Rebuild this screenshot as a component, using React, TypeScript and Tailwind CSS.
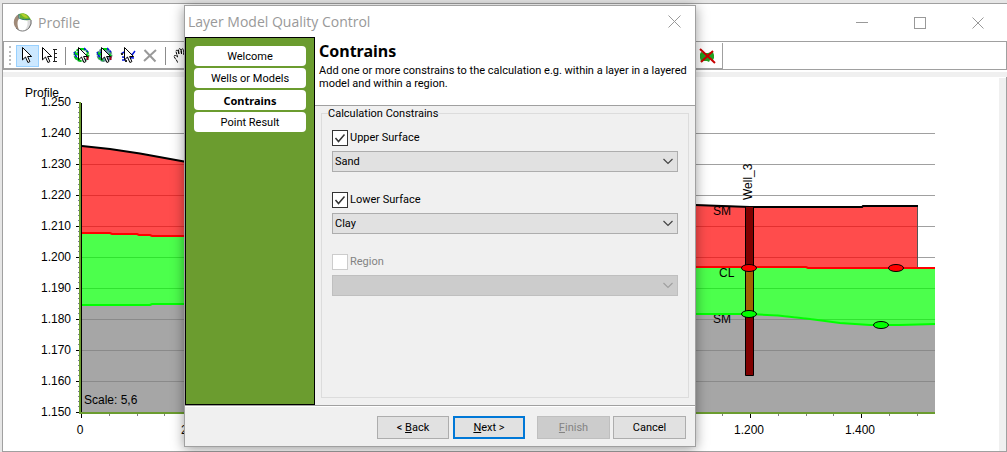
import type { ReactNode } from "react";

const steps = ["Welcome", "Wells or Models", "Contrains", "Point Result"];

const constrains = [
  { id: "upper", label: "Upper Surface", value: "Sand", enabled: true },
  { id: "lower", label: "Lower Surface", value: "Clay", enabled: true },
  { id: "region", label: "Region", value: "", enabled: false }
];

const levels = ["1.250", "1.240", "1.230", "1.220", "1.210", "1.200", "1.190", "1.180", "1.170", "1.160", "1.150"];

const distances = [
  { label: "0", x: 81 },
  { label: "200", x: 192 },
  { label: "1.200", x: 750 },
  { label: "1.400", x: 861 }
];

function ToolButton({ label, active, children }: { label: string; active?: boolean; children: ReactNode }) {
  return (
    <button
      type="button"
      aria-label={label}
      className={
        active
          ? "flex h-[22px] w-[23px] shrink-0 items-center justify-center border border-[#99d1ff] bg-[#cce8ff]"
          : "flex h-[22px] w-[23px] shrink-0 items-center justify-center"
      }
    >
      {children}
    </button>
  );
}

function Separator() {
  return <span className="mr-1 ml-[3px] h-[18px] w-px shrink-0 bg-[#8c8c8c]" />;
}

function Arrow({ x = 0 }: { x?: number }) {
  return (
    <path
      transform={`translate(${x} 0)`}
      d="M.5.5v12.4l3-2.9 2.4 5.5 2-.9-2.300-5.100h4z"
      fill="#fff"
      stroke="#000"
      strokeWidth="1"
    />
  );
}

function PointerIcon() {
  return (
    <svg width="11" height="17" viewBox="0 0 11 17">
      <Arrow />
    </svg>
  );
}

function PointerListIcon() {
  return (
    <svg width="17" height="17" viewBox="0 0 17 17">
      <Arrow />
      <path d="M12.500 2.500v12M11 2.500h4M12 6.500h3M12 10.500h3M11 14.500h4" fill="none" stroke="#222" />
    </svg>
  );
}

function GlobePointerIcon({ fill, rim }: { fill: string; rim: string }) {
  return (
    <svg width="17" height="17" viewBox="0 0 17 17">
      <ellipse cx="8.500" cy="8" rx="7" ry="6" fill={fill} stroke={rim} strokeWidth="2" strokeDasharray="4 1" />
      <path d="M1 5l4 8M2 9l5-6M11 1l4 4M10 14l5-2" stroke="#0014dc" strokeWidth="1.500" strokeDasharray="3 1" />
      <path d="M2 6l4 2M3 11l4 2M7 2h4M13 7l2 2" stroke="#00d214" strokeWidth="2" />
      <path d="M14.500 9v4" stroke="#a00020" strokeWidth="2" />
      <Arrow x={5} />
    </svg>
  );
}

function LinePointerIcon() {
  return (
    <svg width="17" height="17" viewBox="0 0 17 17">
      <path d="M2 7l5-3 6 4 3-4M3 10l12 1M3 13h4" fill="none" stroke="#0014dc" strokeWidth="1.500" />
      <path d="M2 6h2v2H2zM6 13h2v2H6z" fill="#222" />
      <Arrow x={5} />
    </svg>
  );
}

function CrossIcon() {
  return (
    <svg width="15" height="15" viewBox="0 0 15 15">
      <path d="M1.500 2l11 11.500M13 2L1 13" stroke="#999" strokeWidth="2" />
    </svg>
  );
}

function PanIcon() {
  return (
    <svg width="17" height="17" viewBox="0 0 17 17">
      <path
        d="M4.500 15.500c0-2-3-4-3.500-6.500 1-1 2-.5 3.500 1L3 4.500c0-1.500 1.500-2 2-.5l1 3-.5-4c0-1.500 2-2 2.300 0l.7 4V3c0-1.500 2-1.500 2.200 0v4.500l.8-3c.5-1.500 2-1 2 .5l-.5 5-1.500 5.500"
        fill="#fff"
        stroke="#000"
        strokeDasharray="3 .5"
      />
    </svg>
  );
}

function RemoveRegionIcon() {
  return (
    <svg width="17" height="16" viewBox="0 0 17 16">
      <path d="M2 4l3 1h4l3-1h2l1 3v3l-1 2h-3l-1 2-2-1H4l-2 1-1-4V6z" fill="#22a022" />
      <path d="M1 1l15 14M14 3L2 14" stroke="#c80000" strokeWidth="2" />
    </svg>
  );
}

function Logo() {
  return (
    <svg width="19" height="19" viewBox="0 0 19 19">
      <path d="M4 16C-1 12 0 4 6 1v5C4 8 4 12 6 17z" fill="#a08a78" />
      <path d="M14 17c4-3 5-7 4-11h-4c1 4 1 7-2 11z" fill="#dcdcdc" />
      <path d="M3 15c4 4 9 4 13 0" fill="none" stroke="#777" />
      <path d="M18 7v4l-2 4" fill="none" stroke="#666" />
      <path d="M6 1c5-2 10 1 12 6-3 0-8 1-11-2z" fill="#6bb42c" />
      <path d="M8 1c3-1 6 1 7 4-3 0-5-1-7-4z" fill="#b4cf2c" />
      <path d="M6 1v4c3 2 8 2 11 1" fill="none" stroke="#2b7a78" />
    </svg>
  );
}

function ProfileChart() {
  return (
    <svg viewBox="3 77 996 374" className="block h-auto w-full" fontFamily="Liberation Sans, sans-serif" fontSize="12">
      <text x="25" y="97">Profile</text>
      {levels.map((level, i) => (
        <g key={level}>
          <text x="71" y={106 + i * 31} textAnchor="end">{level}</text>
          {i > 0 && i < 10 && <path d={`M82 ${133.5 + (i - 1) * 31}H935`} stroke="#a0a0a0" />}
          <path d={`M76 ${102.5 + i * 31}h4`} stroke="#000" />
          {i < 10 && <path d={`M78.500 ${107 + i * 31}v1m0 4v1m0 4v1m0 4v1m0 4v1`} stroke="#7a7aa0" />}
        </g>
      ))}

      <g fillOpacity="0.7">
        <path d="M82 146L110 149 140 153.500 184 161.500C350 190 550 204 695 204.500L748 206.500H862L917.500 206V268L695 266.500 184 236 82 233z" fill="#f00" />
        <path d="M82 233L110 233.500 150 235 184 236 695 266.500 935 268V324.500L900 325H870L840 323 810 318.500 778 315 750 314H695L184 304 82 304.500z" fill="#0f0" />
        <text x="713" y="215" fillOpacity="1">SM</text>
        <path d="M82 304.500L184 304 695 314H750L778 315 810 318.500 840 323 870 325H900L935 324.500V412H82z" fill="#808080" />
      </g>
      <text x="719" y="277">CL</text>
      <text x="713" y="323">SM</text>
      <path d="M695 308h40v6h-40z" fill="#4cff4c" />

      <path d="M917.500 206v62" stroke="#555" />
      <g fill="none" strokeWidth="2">
        <path d="M82 146L110 149 140 153.500 184 161.500C350 190 550 204 695 205L722 206 750 207H862L863 206H918" stroke="#000" />
        <path d="M82 233L110 233L112 234L137 234 139 235 150 235 152 236H184L695 267H806L808 268H935" stroke="#f00" />
        <path d="M82 305H150L152 304H184L695 314H750L778 315.500 810 319 840 323 870 325H900L935 324" stroke="#0f0" />
      </g>

      <g stroke="#000">
        <path d="M745.500 206.500h8v169h-8z" fill="#800000" />
        <path d="M745.500 268h8v46h-8z" fill="#a06400" />
        <ellipse cx="749" cy="268" rx="7.500" ry="3.500" fill="#f00" />
        <ellipse cx="896" cy="268" rx="7.500" ry="3.500" fill="#f00" />
        <ellipse cx="749" cy="314" rx="7.500" ry="3.500" fill="#0f0" />
        <ellipse cx="881" cy="325" rx="7.500" ry="3.500" fill="#0f0" />
      </g>
      <text transform="translate(752 200) rotate(-90)">Well_3</text>

      <path d="M80 102v312" stroke="#6b9c2f" strokeWidth="2" />
      <path d="M81.500 103v309" stroke="#000" />
      <path d="M79 413h856" stroke="#6b9c2f" strokeWidth="2" />
      {distances.map(({ label, x }) => (
        <g key={label}>
          <path d={`M${x}.5 414v4`} stroke="#000" />
          <text x={x - 1} y="434" textAnchor="middle">{label}</text>
        </g>
      ))}
      <path
        d="M109.500 414v2m28 -2v2m27 -2v2M722.500 414v2M778.500 414v2m28 -2v2m27 -2v2M889.500 414v2m28 -2v2"
        stroke="#808080"
      />
      <text x="84" y="404">Scale: 5,6</text>
    </svg>
  );
}

function ConstrainField({ id, label, value, enabled }: (typeof constrains)[number]) {
  return (
    <div>
      <div className="relative flex h-4 items-center gap-0.5">
        <input
          id={id}
          type="checkbox"
          defaultChecked={enabled}
          disabled={!enabled}
          className="size-4 appearance-none border border-[#333] bg-white disabled:border-[#ccc]"
        />
        {enabled && (
          <svg className="pointer-events-none absolute top-0 left-0" width="16" height="16" viewBox="0 0 16 16">
            <path d="M3.500 8l3 3.500 6-7" fill="none" stroke="#333" strokeWidth="1.500" />
          </svg>
        )}
        <label htmlFor={id} className={enabled ? "pb-0.5" : "pb-0.5 text-[#838383]"}>
          {label}
        </label>
      </div>
      <div className="relative mt-[5px]">
        <select
          aria-label={label}
          defaultValue={value}
          disabled={!enabled}
          className="block h-[21px] w-full appearance-none border border-[#adadad] bg-[#e1e1e1] px-[2px] disabled:border-[#bfbfbf] disabled:bg-[#ccc] disabled:opacity-100"
        >
          <option>{value}</option>
        </select>
        <svg className="pointer-events-none absolute top-[7px] right-[5px]" width="10" height="7" viewBox="0 0 10 7">
          <path d="M.5 1L5 5.500 9.500 1" fill="none" stroke={enabled ? "#444" : "#a0a0a0"} strokeWidth="1.200" />
        </svg>
      </div>
    </div>
  );
}

function QualityControlDialog() {
  return (
    <section
      role="dialog"
      aria-label="Layer Model Quality Control"
      className="absolute top-[5px] left-[184px] w-[512px] border border-[#a0a0a0] bg-[#f0f0f0] font-[Roboto,sans-serif] text-[11px] leading-[13px] text-black shadow-[0_2px_12px_rgba(0,0,0,0.4)]"
    >
      <div className="flex h-[31px] items-center justify-between bg-white pr-[14px] pl-[3px]">
        <h2 className="font-['Open_Sans',sans-serif] text-[14px] leading-5 text-[#999]">Layer Model Quality Control</h2>
        <button type="button" aria-label="Close">
          <svg width="13" height="13" viewBox="0 0 13 13">
            <path d="M.5.5l12 12M12.500.5l-12 12" stroke="#999" />
          </svg>
        </button>
      </div>

      <div className="flex border-b border-[#a0a0a0]">
        <nav className="flex h-[368px] w-[130px] shrink-0 flex-col gap-0.5 border border-black bg-[#6b9c2f] px-2 pt-2">
          {steps.map((step) => (
            <button
              key={step}
              type="button"
              className={
                step === "Contrains"
                  ? "h-5 rounded bg-white font-['Noto_Sans',sans-serif] font-bold"
                  : "h-5 rounded bg-white"
              }
            >
              {step}
            </button>
          ))}
        </nav>

        <div className="flex min-w-0 flex-1 flex-col">
          <header className="h-[69px] border-b border-[#a0a0a0] bg-white px-1 pt-1">
            <h1 className="font-['Noto_Sans',sans-serif] text-base leading-5 font-bold">Contrains</h1>
            <p className="pt-[3px] whitespace-nowrap">
              Add one or more constrains to the calculation e.g. within a layer in a layered
              <br />
              model and within a region.
            </p>
          </header>

          <fieldset className="mx-1.5 mt-px mb-[7px] flex-1 border border-[#dcdcdc] px-[10px] pt-[10px]">
            <legend className="-ml-1">Calculation Constrains</legend>
            <div className="flex flex-col gap-5">
              {constrains.map((item) => (
                <ConstrainField key={item.id} {...item} />
              ))}
            </div>
          </fieldset>
        </div>
      </div>

      <footer className="flex justify-end border-t border-white pt-[9px] pr-[9px] pb-[7px]">
        <button type="button" className="mr-1 h-[23px] w-[72px] border border-[#adadad] bg-[#e1e1e1]">
          &lt; <u>B</u>ack
        </button>
        <button type="button" className="mr-3 h-[23px] w-[72px] border-2 border-[#0078d7] bg-[#e1e1e1]">
          <u>N</u>ext &gt;
        </button>
        <button type="button" disabled className="mr-[3px] h-[23px] w-[73px] border border-[#bfbfbf] bg-[#ccc] text-[#838383]">
          <u>F</u>inish
        </button>
        <button type="button" className="h-[23px] w-[73px] border border-[#adadad] bg-[#e1e1e1]">
          Cancel
        </button>
      </footer>
    </section>
  );
}

export default function App() {
  return (
    <div className="relative min-h-screen overflow-hidden bg-[#e6e6e6] pt-[3px] pl-[2px]">
      <main className="border-t border-b border-l border-[#a0a0a0] bg-white">
        <div className="flex h-[37px] items-center justify-between pr-[23px] pl-[10px]">
          <div className="flex items-center gap-1.5">
            <Logo />
            <h1 className="font-['Open_Sans',sans-serif] text-[14px] leading-5 text-[#999]">Profile</h1>
          </div>
          <div className="flex items-center gap-[46px]">
            <button type="button" aria-label="Minimize" className="h-px w-3 bg-[#999]" />
            <button type="button" aria-label="Maximize" className="size-3 border border-[#999]" />
            <button type="button" aria-label="Close">
              <svg width="12" height="12" viewBox="0 0 12 12">
                <path d="M.5.5l11 11M11.500.5l-11 11" stroke="#999" />
              </svg>
            </button>
          </div>
        </div>

        <div className="border border-[#a0a0a0] pt-px">
          <div className="flex h-[26px] w-[719px] items-center justify-between border-r border-b border-[#a0a0a0] pr-[3px] pl-[5px]">
            <div className="flex items-center">
              <span className="mr-1 h-[19px] w-[3px] border-l-2 border-dotted border-[#bbb]" />
              <ToolButton label="Select" active><PointerIcon /></ToolButton>
              <ToolButton label="Select from list"><PointerListIcon /></ToolButton>
              <Separator />
              <ToolButton label="Select layer"><GlobePointerIcon fill="#fff" rim="#00b414" /></ToolButton>
              <ToolButton label="Select region"><GlobePointerIcon fill="#6ea0b4" rim="#4b8c78" /></ToolButton>
              <ToolButton label="Select line"><LinePointerIcon /></ToolButton>
              <ToolButton label="Delete"><CrossIcon /></ToolButton>
              <Separator />
              <ToolButton label="Pan"><PanIcon /></ToolButton>
            </div>
            <ToolButton label="Remove region"><RemoveRegionIcon /></ToolButton>
          </div>
        </div>

        <div className="mt-0.5 h-[5px] bg-[#f0f0f0]" />
        <div className="flex border-r border-[#a0a0a0]">
          <div className="min-w-0 flex-1">
            <ProfileChart />
          </div>
          <div className="mt-px w-[7px] shrink-0 bg-[#f0f0f0]" />
        </div>
      </main>
      <QualityControlDialog />
    </div>
  );
}
